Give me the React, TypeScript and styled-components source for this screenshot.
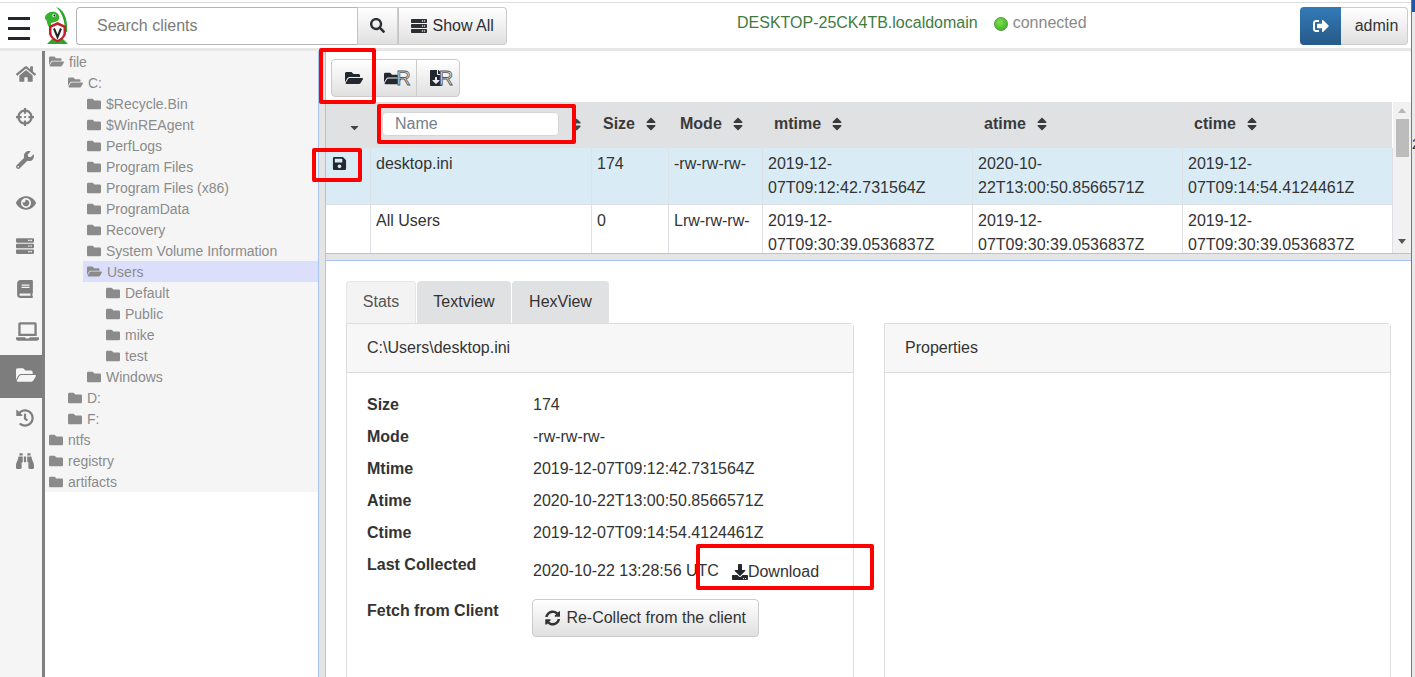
import styled, { createGlobalStyle } from 'styled-components'
import {
  FaBinoculars,
  FaBook,
  FaCaretDown,
  FaCrosshairs,
  FaDownload,
  FaEye,
  FaFileDownload,
  FaFolder,
  FaFolderOpen,
  FaHistory,
  FaHome,
  FaLaptop,
  FaSave,
  FaSearch,
  FaServer,
  FaSignOutAlt,
  FaSort,
  FaSyncAlt,
  FaWrench,
} from 'react-icons/fa'

const navIcons = [
  { Icon: FaHome, size: 20 },
  { Icon: FaCrosshairs, size: 18 },
  { Icon: FaWrench, size: 18 },
  { Icon: FaEye, size: 20 },
  { Icon: FaServer, size: 18 },
  { Icon: FaBook, size: 18 },
  { Icon: FaLaptop, size: 23 },
  { Icon: FaFolderOpen, size: 20, active: true },
  { Icon: FaHistory, size: 18 },
  { Icon: FaBinoculars, size: 18 },
]

const treeRows = [
  { name: 'file', level: 0, open: true },
  { name: 'C:', level: 1, open: true },
  { name: '$Recycle.Bin', level: 2 },
  { name: '$WinREAgent', level: 2 },
  { name: 'PerfLogs', level: 2 },
  { name: 'Program Files', level: 2 },
  { name: 'Program Files (x86)', level: 2 },
  { name: 'ProgramData', level: 2 },
  { name: 'Recovery', level: 2 },
  { name: 'System Volume Information', level: 2 },
  { name: 'Users', level: 2, open: true, selected: true },
  { name: 'Default', level: 3 },
  { name: 'Public', level: 3 },
  { name: 'mike', level: 3 },
  { name: 'test', level: 3 },
  { name: 'Windows', level: 2 },
  { name: 'D:', level: 1 },
  { name: 'F:', level: 1 },
  { name: 'ntfs', level: 0 },
  { name: 'registry', level: 0 },
  { name: 'artifacts', level: 0 },
]

const columns = ['Size', 'Mode', 'mtime', 'atime', 'ctime']
const colWidths = [44, 221, 77, 94, 210, 210, 210]

const files = [
  {
    name: 'desktop.ini',
    size: '174',
    mode: '-rw-rw-rw-',
    mtime: '2019-12-07T09:12:42.731564Z',
    atime: '2020-10-22T13:00:50.8566571Z',
    ctime: '2019-12-07T09:14:54.4124461Z',
    selected: true,
  },
  {
    name: 'All Users',
    size: '0',
    mode: 'Lrw-rw-rw-',
    mtime: '2019-12-07T09:30:39.0536837Z',
    atime: '2019-12-07T09:30:39.0536837Z',
    ctime: '2019-12-07T09:30:39.0536837Z',
  },
]

const stats = [
  ['Size', '174'],
  ['Mode', '-rw-rw-rw-'],
  ['Mtime', '2019-12-07T09:12:42.731564Z'],
  ['Atime', '2020-10-22T13:00:50.8566571Z'],
  ['Ctime', '2019-12-07T09:14:54.4124461Z'],
]

const VeloLogo = () => (
  <svg width="24" height="38" viewBox="0 0 24 38" aria-label="logo">
    <path d="M11 0C18 2 23 10 22 25L20 25C20 14 17 5 11 0z" fill="#2ca52a" />
    <path
      d="M0 10C1 6 6 4 10 5C13 6 15 9 14 12C13 15 9 15 6 16C5 18 8 19 9 20L5 21C2 18 2 15 2 14C0 13 0 11 0 10z"
      fill="#35b52f"
    />
    <circle cx="9" cy="8.5" r="1.7" fill="#fff" />
    <circle cx="9.3" cy="8.5" r="0.9" fill="#111" />
    <path d="M2 37L7 32H18L23 37z" fill="#2ca52a" />
    <path d="M4 19L12.5 15L21 19V26C21 30 17 33 12.5 35.5C8 33 4 30 4 26z" fill="#c3202a" />
    <path d="M6.5 20.5L12.5 18L18.5 20.5V26C18.5 29 16 31 12.5 33C9 31 6.5 29 6.5 26z" fill="#fff" />
    <path d="M9 21.5L12.5 30L16 21.5" fill="none" stroke="#222" strokeWidth="2" />
  </svg>
)

const App = () => {
  return (
    <Page>
      <GlobalStyle />
      <Main>
        <Navbar>
          <Burger>
            <span />
            <span />
            <span />
          </Burger>
          <LogoSlot>
            <VeloLogo />
          </LogoSlot>
          <SearchGroup>
            <SearchInput placeholder="Search clients" />
            <NavButton $width={41}>
              <FaSearch size={15} />
            </NavButton>
            <NavButton $width={109} $last>
              <FaServer size={16} />
              Show All
            </NavButton>
          </SearchGroup>
          <HostName>DESKTOP-25CK4TB.localdomain</HostName>
          <Connected>
            <Dot />
            connected
          </Connected>
          <UserGroup>
            <LogoutButton>
              <FaSignOutAlt size={16} />
            </LogoutButton>
            <UserName>admin</UserName>
          </UserGroup>
        </Navbar>
        <Content>
          <SideNav>
            {navIcons.map(({ Icon, size, active }, index) => (
              <NavItem key={index} $active={active}>
                <Icon size={size} />
              </NavItem>
            ))}
          </SideNav>
          <TreePane>
            <Tree>
              {treeRows.map((row) => (
                <TreeRow key={row.name} $level={row.level} $selected={row.selected}>
                  {row.open ? <FaFolderOpen size={15} /> : <FaFolder size={14} />}
                  {row.name}
                </TreeRow>
              ))}
            </Tree>
          </TreePane>
          <VSplitter />
          <Workspace>
            <Toolbar>
              <ToolGroup>
                <ToolButton $shift={3}>
                  <FaFolderOpen size={18} />
                </ToolButton>
                <ToolButton $shift={6}>
                  <FaFolderOpen size={17} />
                  <RMark>R</RMark>
                </ToolButton>
                <ToolButton $shift={5}>
                  <FaFileDownload size={16} />
                  <RMark>R</RMark>
                </ToolButton>
              </ToolGroup>
            </Toolbar>
            <TableArea>
              <TableClip>
                <FileTable>
                  <colgroup>
                    {colWidths.map((w, index) => (
                      <col key={index} width={w} />
                    ))}
                  </colgroup>
                  <thead>
                    <tr>
                      <Th>
                        <CaretSlot>
                          <FaCaretDown size={13} />
                        </CaretSlot>
                      </Th>
                      <Th>
                        <NameHead>
                          <NameFilter placeholder="Name" />
                          <FaSort size={15} />
                        </NameHead>
                      </Th>
                      {columns.map((col) => (
                        <Th key={col}>
                          <HeadLabel>
                            {col}
                            <SortBox>
                              <FaSort size={16} />
                            </SortBox>
                          </HeadLabel>
                        </Th>
                      ))}
                    </tr>
                  </thead>
                  <tbody>
                    {files.map((file) => (
                      <Row key={file.name} $selected={file.selected}>
                        <Td>{file.selected && <SaveIcon size={15} />}</Td>
                        <Td>{file.name}</Td>
                        <Td>{file.size}</Td>
                        <Td>{file.mode}</Td>
                        <Td>{file.mtime}</Td>
                        <Td>{file.atime}</Td>
                        <Td>{file.ctime}</Td>
                      </Row>
                    ))}
                  </tbody>
                </FileTable>
              </TableClip>
              <ScrollBar>
                <ArrowUp />
                <Thumb />
                <ArrowDown />
              </ScrollBar>
            </TableArea>
            <HSplitter />
            <Details>
              <Tabs>
                <Tab $active $width={70}>
                  Stats
                </Tab>
                <Tab $width={94}>Textview</Tab>
                <Tab $width={97}>HexView</Tab>
              </Tabs>
              <Cards>
                <Card>
                  <CardHeader>C:\Users\desktop.ini</CardHeader>
                  <CardBody>
                    {stats.map(([label, value]) => (
                      <StatRow key={label}>
                        <StatLabel>{label}</StatLabel>
                        <span>{value}</span>
                      </StatRow>
                    ))}
                    <CollectedRow>
                      <StatLabel>Last Collected</StatLabel>
                      <CollectedValue>
                        2020-10-22 13:28:56 UTC
                        <DownloadLink>
                          <FaDownload size={16} />
                          Download
                        </DownloadLink>
                      </CollectedValue>
                    </CollectedRow>
                    <StatRow>
                      <StatLabel>Fetch from Client</StatLabel>
                      <CollectButton>
                        <FaSyncAlt size={16} />
                        Re-Collect from the client
                      </CollectButton>
                    </StatRow>
                  </CardBody>
                </Card>
                <Card>
                  <CardHeader>Properties</CardHeader>
                </Card>
              </Cards>
            </Details>
          </Workspace>
        </Content>
      </Main>
      <EdgeStrip>
        <EdgeBlue />
        <EdgeChar>2</EdgeChar>
      </EdgeStrip>
      <Callout $left={319} $top={48} $w={57} $h={56} />
      <Callout $left={377} $top={104} $w={199} $h={40} />
      <Callout $left={312} $top={148} $w={50} $h={34} />
      <Callout $left={696} $top={544} $w={178} $h={46} />
    </Page>
  )
}

export default App

const GlobalStyle = createGlobalStyle`
  html, body {
    margin: 0;
    height: 100%;
    overflow: hidden;
    background: #fff;
  }
  * {
    box-sizing: border-box;
  }
`

const Page = styled.div`
  position: relative;
  display: flex;
  width: 1415px;
  height: 677px;
  overflow: hidden;
  font-family: 'Liberation Sans', Arial, sans-serif;
  font-size: 16px;
  color: #333;
`

const Main = styled.div`
  display: flex;
  flex-direction: column;
  width: 1411px;
  height: 677px;
  padding-top: 2px;
`

const EdgeStrip = styled.div`
  position: relative;
  width: 4px;
  background: #e9e9e9;
  border-left: 1px solid #777;
`

const EdgeBlue = styled.div`
  height: 12px;
  background: #1c5aa6;
`

const EdgeChar = styled.span`
  position: absolute;
  left: 0;
  top: 136px;
  font-size: 14px;
  color: #222;
`

const Navbar = styled.header`
  display: flex;
  flex: none;
  align-items: center;
  height: 49px;
  padding: 0 3px 0 8px;
  border-top: 1px solid #ddd;
  border-bottom: 3px solid #e7e7e7;
`

const Burger = styled.div`
  display: flex;
  flex-direction: column;
  gap: 7px;
  width: 22px;
  margin-top: 5px;

  span {
    height: 3px;
    background: #22282e;
  }
`

const LogoSlot = styled.div`
  display: flex;
  width: 46px;
  padding-left: 15px;
`

const SearchGroup = styled.div`
  display: flex;
  height: 38px;
  width: 431px;
`

const SearchInput = styled.input`
  width: 282px;
  height: 38px;
  padding: 0 20px;
  border: 1px solid #b5b5b5;
  border-right: 0;
  border-radius: 4px 0 0 4px;
  outline: none;
  font: 16px 'Liberation Sans', Arial, sans-serif;

  &::placeholder {
    color: #7b7b7b;
  }
`

const NavButton = styled.button<{ $width: number; $last?: boolean }>`
  display: flex;
  align-items: center;
  justify-content: center;
  gap: 5px;
  width: ${(p) => p.$width}px;
  height: 38px;
  padding: 0;
  border: 1px solid #ccc;
  border-left-color: #c4c4c4;
  border-radius: ${(p) => (p.$last ? '0 4px 4px 0' : '0')};
  background: linear-gradient(#fff, #e0e0e0);
  color: #2b2f33;
  font: 16px 'Liberation Sans', Arial, sans-serif;
`

const HostName = styled.div`
  margin-left: 230px;
  margin-top: -5px;
  color: #3f7b3f;
  white-space: nowrap;
`

const Connected = styled.div`
  display: flex;
  align-items: center;
  gap: 5px;
  margin-left: 16px;
  margin-top: -5px;
  color: #8a8a8a;
`

const Dot = styled.span`
  width: 14px;
  height: 14px;
  margin-top: 2px;
  border-radius: 50%;
  border: 1px solid #5a9a3a;
  background: radial-gradient(circle at 40% 35%, #7fe04f, #2fa51f);
`

const UserGroup = styled.div`
  display: flex;
  margin-left: auto;
  height: 38px;
`

const LogoutButton = styled.div`
  display: flex;
  align-items: center;
  justify-content: center;
  width: 41px;
  border-radius: 4px 0 0 4px;
  background: linear-gradient(#337ab7, #265a88);
  color: #fff;
`

const UserName = styled.div`
  display: flex;
  align-items: center;
  justify-content: center;
  width: 67px;
  padding-left: 5px;
  border: 1px solid #ccc;
  border-left: 0;
  border-radius: 0 4px 4px 0;
  background: linear-gradient(#fff, #e0e0e0);
`

const Content = styled.div`
  display: flex;
  flex: 1;
  min-height: 0;
`

const SideNav = styled.nav`
  width: 45px;
  padding-top: 1px;
  background: #f5f5f5;
  border-right: 3px solid #808080;
`

const NavItem = styled.div<{ $active?: boolean }>`
  display: flex;
  align-items: center;
  height: 43px;
  padding-left: 16px;
  padding-bottom: ${(p) => (p.$active ? '3px' : '0')};
  margin-top: ${(p) => (p.$active ? '2px' : '0')};
  margin-bottom: ${(p) => (p.$active ? '-2px' : '0')};
  background: ${(p) => (p.$active ? '#7d7d7d' : 'transparent')};
  color: ${(p) => (p.$active ? '#f5f5f5' : '#7f7f7f')};
`

const TreePane = styled.div`
  width: 273px;
`

const Tree = styled.div`
  background: #f5f5f5;
`

const TreeRow = styled.div<{ $level: number; $selected?: boolean }>`
  display: flex;
  align-items: center;
  gap: 5px;
  height: 21px;
  margin-left: ${(p) => p.$level * 19}px;
  padding-left: 4px;
  background: ${(p) => (p.$selected ? '#dcdffb' : 'transparent')};
  color: #8b8b8b;
  font-size: 14px;
  white-space: nowrap;

  svg {
    flex: none;
  }
`

const VSplitter = styled.div`
  width: 8px;
  background: #e5e5e5;
  border-left: 1px solid #a8c4f5;
  border-right: 1px solid #a8c4f5;
`

const Workspace = styled.main`
  display: flex;
  flex-direction: column;
  flex: 1;
  min-width: 0;
  min-height: 0;
`

const Toolbar = styled.div`
  flex: none;
  height: 51px;
  padding: 8px 0 0 5px;
`

const ToolGroup = styled.div`
  display: flex;
  width: 129px;
  height: 38px;
  border: 1px solid #ccc;
  border-radius: 4px;
  background: linear-gradient(#fff, #e0e0e0);
`

const ToolButton = styled.div<{ $shift?: number }>`
  display: flex;
  flex: 1;
  align-items: center;
  justify-content: center;
  padding-left: ${(p) => p.$shift ?? 0}px;
  color: #22282e;

  & + & {
    border-left: 1px solid #ccc;
  }
`

const RMark = styled.span`
  margin-left: -5px;
  font-size: 20px;
  line-height: 20px;
  color: #e6e6e6;
  -webkit-text-stroke: 0.8px #555;
`

const TableArea = styled.div`
  display: flex;
  flex: none;
  height: 151px;
`

const TableClip = styled.div`
  width: 1067px;
  height: 151px;
  overflow: hidden;
`

const FileTable = styled.table`
  width: 1066px;
  table-layout: fixed;
  border-collapse: collapse;
`

const Th = styled.th`
  height: 46px;
  padding: 0 6px 2px;
  background: #e0e1e3;
  text-align: left;
  font-weight: bold;
`

const CaretSlot = styled.span`
  display: flex;
  justify-content: flex-end;
  padding: 6px 3px 0 0;
  color: #444;
`

const NameHead = styled.div`
  display: flex;
  align-items: center;
  gap: 10px;
  margin-left: 6px;
  color: #444;
`

const NameFilter = styled.input`
  width: 177px;
  height: 24px;
  padding: 0 12px;
  border: 1px solid #d5d6d8;
  border-radius: 4px;
  background: #fff;
  outline: none;
  font: 16px 'Liberation Sans', Arial, sans-serif;

  &::placeholder {
    color: #72808c;
  }
`

const HeadLabel = styled.span`
  display: flex;
  align-items: center;
  gap: 8px;
  padding-left: 6px;
  color: #3a3a3a;
`

const SortBox = styled.span`
  display: flex;
  color: #3a3a3a;
`

const Row = styled.tr<{ $selected?: boolean }>`
  background: ${(p) => (p.$selected ? '#d9ecf5' : '#fff')};
`

const Td = styled.td`
  height: 56px;
  padding: 4px 6px 4px 5.5px;
  border: 1px solid #dde0e4;
  border-top: 0;
  vertical-align: top;
  line-height: 24px;

  &:first-child {
    border-left: 0;
  }
`

const SaveIcon = styled(FaSave)`
  display: block;
  margin: 4px 0 0 0.5px;
  color: #22282e;
`

const ScrollBar = styled.div`
  flex: 1;
  background: #f1f1f1;
`

const ArrowUp = styled.div`
  width: 0;
  margin: 6px auto 0;
  border: 4px solid transparent;
  border-top: 0;
  border-bottom: 5px solid #b5b5b5;
`

const Thumb = styled.div`
  width: 13px;
  height: 38px;
  margin: 6px auto 0;
  background: #bcbcbc;
`

const ArrowDown = styled.div`
  width: 0;
  margin: 82px auto 0;
  border: 4px solid transparent;
  border-bottom: 0;
  border-top: 5px solid #555;
`

const HSplitter = styled.div`
  flex: none;
  height: 8px;
  background: #e5e5e5;
  border-top: 1px solid #a8c4f5;
  border-bottom: 1px solid #a8c4f5;
`

const Details = styled.section`
  flex: 1;
  min-height: 0;
  padding: 20px 20px 0;
`

const Tabs = styled.div`
  display: flex;
  gap: 1px;
  height: 42px;
`

const Tab = styled.div<{ $active?: boolean; $width: number }>`
  display: flex;
  align-items: center;
  justify-content: center;
  width: ${(p) => p.$width}px;
  padding-bottom: 2px;
  border: 1px solid ${(p) => (p.$active ? '#e6e6e6' : '#e0e1e3')};
  border-bottom: 0;
  border-radius: 4px 4px 0 0;
  background: ${(p) => (p.$active ? '#f3f3f3' : '#e0e1e3')};
  color: ${(p) => (p.$active ? '#555' : '#333')};
`

const Cards = styled.div`
  display: grid;
  grid-template-columns: 508px 507px;
  gap: 30px;
`

const Card = styled.div`
  height: 400px;
  border: 1px solid #ddd;
  border-radius: 0 4px 4px 4px;
`

const CardHeader = styled.div`
  display: flex;
  align-items: center;
  height: 49px;
  padding: 0 20px;
  background: #f7f7f7;
  border-bottom: 1px solid #ddd;
`

const CardBody = styled.div`
  padding: 16px 20px;
`

const StatRow = styled.div`
  display: grid;
  grid-template-columns: 166px 1fr;
  min-height: 32px;
  line-height: 32px;
  white-space: nowrap;
`

const StatLabel = styled.span`
  font-weight: bold;
`

const CollectedRow = styled(StatRow)`
  height: 46px;
`

const CollectedValue = styled.span`
  display: flex;
  align-items: flex-start;
  gap: 13px;
  padding-top: 6px;
`

const DownloadLink = styled.span`
  display: inline-flex;
  align-items: center;
  height: 32px;
  margin-top: 1px;
  color: #333;

  svg {
    color: #22282e;
  }
`

const CollectButton = styled.button`
  display: flex;
  align-items: center;
  gap: 6px;
  width: 227px;
  height: 38px;
  margin: 4px 0 0 -1px;
  padding: 0 12px;
  border: 1px solid #ccc;
  border-radius: 4px;
  background: linear-gradient(#fff, #e0e0e0);
  color: #333;
  font: 16px 'Liberation Sans', Arial, sans-serif;
  white-space: nowrap;
`

const Callout = styled.div<{ $left: number; $top: number; $w: number; $h: number }>`
  position: absolute;
  left: ${(p) => p.$left}px;
  top: ${(p) => p.$top}px;
  width: ${(p) => p.$w}px;
  height: ${(p) => p.$h}px;
  border: 4px solid #fe0000;
  border-radius: 2px;
  pointer-events: none;
`
